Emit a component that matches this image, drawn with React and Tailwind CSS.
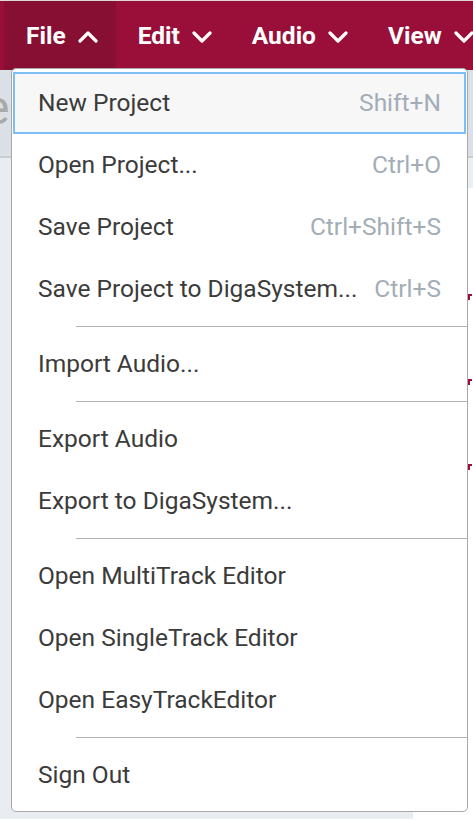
import React from "react";

const Chevron = ({ up }) => (
  <svg width="20" height="12" viewBox="0 0 20 12" className="ml-3">
    <polyline
      points={up ? "2,10 10,2 18,10" : "2,2 10,10 18,2"}
      fill="none"
      stroke="white"
      strokeWidth="3.2"
      strokeLinecap="round"
      strokeLinejoin="round"
    />
  </svg>
);

const NavButton = ({ label, open }) => (
  <div
    className={
      "flex items-center h-full pt-[2px] pl-[22px] pr-[18px] " +
      (open ? "bg-[#860f33]" : "")
    }
  >
    <span className="text-[24.5px] font-bold text-white">{label}</span>
    <Chevron up={open} />
  </div>
);

const menuGroups = [
  [
    { label: "New Project", key: "Shift+N", active: true },
    { label: "Open Project...", key: "Ctrl+O" },
    { label: "Save Project", key: "Ctrl+Shift+S" },
    { label: "Save Project to DigaSystem...", key: "Ctrl+S" },
  ],
  [{ label: "Import Audio..." }],
  [{ label: "Export Audio" }, { label: "Export to DigaSystem..." }],
  [
    { label: "Open MultiTrack Editor" },
    { label: "Open SingleTrack Editor" },
    { label: "Open EasyTrackEditor" },
  ],
  [{ label: "Sign Out" }],
];

const MenuItem = ({ label, shortcut, active }) => (
  <div
    className={
      "mx-[1px] h-[62px] flex items-center justify-between " +
      (active
        ? "bg-[#f7f7f7] border-2 border-[#7dbff5] px-[23px]"
        : "px-[25px]")
    }
  >
    <span className="text-[24.5px] text-[#3b3b3b]">{label}</span>
    {shortcut && (
      <span className="text-[24.5px] text-[#a3adb7]">{shortcut}</span>
    )}
  </div>
);

const FileMenu = () => (
  <div className="absolute left-[11px] top-[68px] w-[457px] bg-white border border-[#a8a8a8] rounded-[5px] pt-[3px] pb-[5px]">
    {menuGroups.map((group, gi) => (
      <div key={gi}>
        {gi > 0 && (
          <div className="py-[6px] pl-[64px]">
            <div className="h-px bg-[#b3b3b3]"></div>
          </div>
        )}
        {group.map((item) => (
          <MenuItem
            key={item.label}
            label={item.label}
            shortcut={item.key}
            active={item.active}
          />
        ))}
      </div>
    ))}
  </div>
);

const App = () => {
  return (
    <div
      className="relative w-[473px] h-[821px] overflow-hidden bg-white"
      style={{ fontFamily: "Roboto, 'Liberation Sans', sans-serif" }}
    >
      <div className="h-px bg-[#d9d9d9]"></div>
      <div className="flex h-[69px] bg-[#990f39] pl-[4px]">
        <NavButton label="File" open />
        <NavButton label="Edit" />
        <NavButton label="Audio" />
        <NavButton label="View" />
      </div>
      <div className="h-[88px] bg-[#dae0e6] border-b-2 border-[#c9cdd1] overflow-hidden">
        <div className="w-[11px] overflow-hidden">
          <span className="block w-[30px] ml-[-16px] mt-[14px] text-[48px] leading-none text-[#a9a9a9]">
            e
          </span>
        </div>
      </div>
      <div className="flex h-[661px]">
        <div className="w-[413px] bg-[#e9edf1]"></div>
        <div className="flex-1 flex flex-col">
          <div className="h-[30px] bg-[#eceff2]"></div>
          <div className="flex-1 bg-white flex flex-col items-end pr-[1px] pt-[106px] gap-[79px]">
            <div className="w-[4px] h-[6px] border-t-2 border-l-2 border-[#9b1036]"></div>
            <div className="w-[4px] h-[6px] border-t-2 border-l-2 border-[#9b1036]"></div>
            <div className="w-[4px] h-[6px] border-t-2 border-l-2 border-[#9b1036]"></div>
          </div>
        </div>
      </div>
      <FileMenu />
    </div>
  );
};

export default App;
